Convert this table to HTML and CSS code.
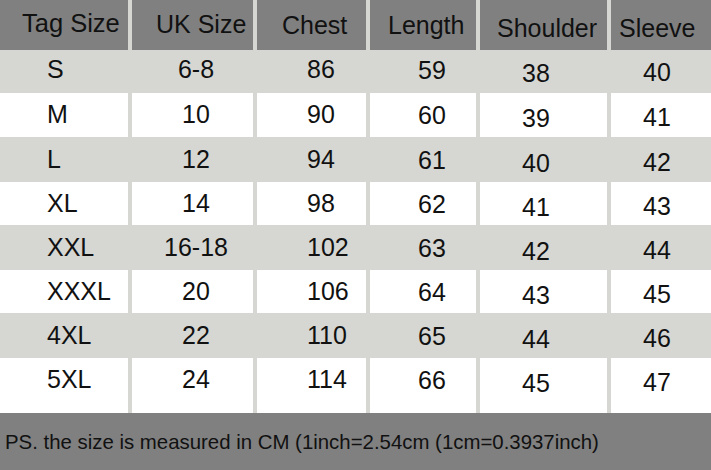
FILE: index.html
```html
<!DOCTYPE html>
<html>
<head>
<meta charset="utf-8">
<link rel="stylesheet" href="styles.css">
</head>
<body>
<div class="chart">
  <div class="row head">
    <div class="cell c1">Tag Size</div>
    <div class="cell c2">UK Size</div>
    <div class="cell c3">Chest</div>
    <div class="cell c4">Length</div>
    <div class="cell c5">Shoulder</div>
    <div class="cell c6">Sleeve</div>
  </div>
  <div class="row light r1">
    <div class="cell c1">S</div><div class="cell c2">6-8</div><div class="cell c3">86</div><div class="cell c4">59</div><div class="cell c5">38</div><div class="cell c6">40</div>
  </div>
  <div class="row white r2">
    <div class="cell c1">M</div><div class="cell c2">10</div><div class="cell c3">90</div><div class="cell c4">60</div><div class="cell c5">39</div><div class="cell c6">41</div>
  </div>
  <div class="row light">
    <div class="cell c1">L</div><div class="cell c2">12</div><div class="cell c3">94</div><div class="cell c4">61</div><div class="cell c5">40</div><div class="cell c6">42</div>
  </div>
  <div class="row white">
    <div class="cell c1">XL</div><div class="cell c2">14</div><div class="cell c3">98</div><div class="cell c4">62</div><div class="cell c5">41</div><div class="cell c6">43</div>
  </div>
  <div class="row light">
    <div class="cell c1">XXL</div><div class="cell c2">16-18</div><div class="cell c3">102</div><div class="cell c4">63</div><div class="cell c5">42</div><div class="cell c6">44</div>
  </div>
  <div class="row white">
    <div class="cell c1">XXXL</div><div class="cell c2">20</div><div class="cell c3">106</div><div class="cell c4">64</div><div class="cell c5">43</div><div class="cell c6">45</div>
  </div>
  <div class="row light">
    <div class="cell c1">4XL</div><div class="cell c2">22</div><div class="cell c3">110</div><div class="cell c4">65</div><div class="cell c5">44</div><div class="cell c6">46</div>
  </div>
  <div class="row white last">
    <div class="cell c1">5XL</div><div class="cell c2">24</div><div class="cell c3">114</div><div class="cell c4">66</div><div class="cell c5">45</div><div class="cell c6">47</div>
  </div>
  <div class="footer">PS. the size is measured in CM (1inch=2.54cm (1cm=0.3937inch)</div>
</div>
</body>
</html>
```

FILE: styles.css
```css
html, body {
  margin: 0;
  padding: 0;
}
body {
  width: 711px;
  height: 470px;
  overflow: hidden;
  background: #d6d7d3;
  font-family: "Liberation Sans", Arial, sans-serif;
  color: #111;
}
.chart {
  display: flex;
  flex-direction: column;
  width: 711px;
}
.row {
  display: grid;
  grid-template-columns: 128px 121px 109px 106px 127px 100px;
  column-gap: 4px;
  height: 44px;
  font-size: 25px;
  line-height: 30px;
}
.row.head {
  height: 50px;
}
.row.r1 {
  height: 42px;
}
.row.r2 {
  height: 45px;
}
.row.last {
  height: 56px;
}
.cell {
  box-sizing: border-box;
  white-space: nowrap;
}
.head .cell {
  background: #808080;
}
.white .cell {
  background: #ffffff;
  margin-top: 1px;
}
.light .cell {
  background: #d6d7d3;
}

/* header text positions */
.head .c1 { padding: 8px 0 0 22px; font-size: 25.5px; }
.head .c2 { padding: 9px 0 0 24px; }
.head .c3 { padding: 10px 0 0 25px; }
.head .c4 { padding: 10px 0 0 18px; }
.head .c5 { padding: 13px 0 0 17px; }
.head .c6 { padding: 13px 0 0 8px; }

/* data text positions */
.light .cell { padding-top: 7px; }
.white .cell { padding-top: 6px; }
.c1 { padding-left: 47px; }
.light .c2, .white .c2 { text-align: center; padding-left: 7px; }
.light .c3, .white .c3 { padding-left: 50px; }
.light .c4, .white .c4 { padding-left: 48px; padding-top: 8px; }
.light .c5, .white .c5 { padding-left: 42px; padding-top: 11px; }
.light .c6, .white .c6 { padding-left: 32px; padding-top: 10px; }
.white .c4 { padding-top: 7px; }
.white .c5 { padding-top: 10px; }
.white .c6 { padding-top: 9px; }

/* first data row sits a little higher */
.r1 .c1, .r1 .c2, .r1 .c3 { padding-top: 4px; }
.light.r1 .c4 { padding-top: 5px; }
.light.r1 .c5 { padding-top: 8px; }
.light.r1 .c6 { padding-top: 7px; }

.footer {
  height: 57px;
  background: #808080;
  font-size: 20.4px;
  line-height: 24px;
  padding: 17px 0 0 5px;
  box-sizing: border-box;
  white-space: nowrap;
}
```
